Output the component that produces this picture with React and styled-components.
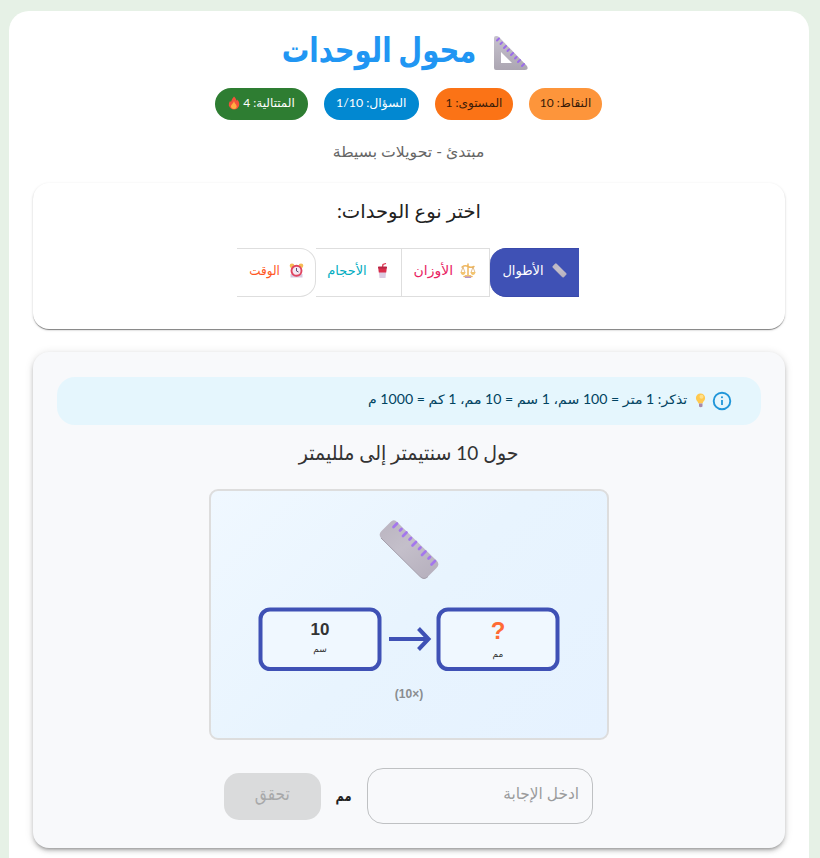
import React from "react";
import styled, { createGlobalStyle } from "styled-components";

const GlobalStyle = createGlobalStyle`
  *, *::before, *::after { box-sizing: border-box; }
  html, body { margin: 0; height: 858px; overflow: hidden; background: #e6f1e6; }
  body { font-family: "Lato", "DejaVu Sans", sans-serif; }
`;

const Page = styled.div`
  direction: rtl;
  width: 820px;
  height: 858px;
  padding: 11px 11px 0 9px;
  overflow: hidden;
`;

const Sheet = styled.main`
  height: 900px;
  padding: 0 24px;
  background: #fff;
  border-radius: 20px;
  display: flex;
  flex-direction: column;
`;

const Text = styled.span`
  display: block;
  margin: 0;
  white-space: nowrap;
  font-size: ${(p) => p.$size}px;
  font-weight: ${(p) => p.$weight || 400};
  color: ${(p) => p.$color || "inherit"};
  line-height: ${(p) => p.$line || 20}px;
  transform: translateY(${(p) => p.$dy || 0}px) scaleX(${(p) => p.$stretch || 1});
  transform-origin: ${(p) => p.$origin || "center"};
`;

const Header = styled.header`
  height: 77px;
  display: flex;
  align-items: flex-start;
  gap: 17px;
  padding: 21px 256px 0 0;
`;

const HeaderIcon = styled.div`
  width: 36px;
  height: 40px;
  padding-top: 3px;
  flex: none;
`;

const Chips = styled.div`
  display: flex;
  justify-content: center;
  gap: 16px;
  padding-right: 1px;
`;

const Chip = styled.div`
  width: ${(p) => p.$width}px;
  height: 32px;
  padding-bottom: 2px;
  border-radius: 16px;
  background: ${(p) => p.$bg};
  color: ${(p) => p.$color};
  display: flex;
  align-items: center;
  justify-content: center;
  gap: 3px;
`;

const Level = styled.div`
  height: 63px;
  padding-top: 21px;
  display: flex;
  justify-content: center;
`;

const Card = styled.section`
  flex: none;
  height: ${(p) => p.$height}px;
  margin-bottom: 23px;
  padding: ${(p) => p.$pad};
  background: ${(p) => p.$bg};
  border-radius: 16px;
  box-shadow: ${(p) => p.$shadow};
  display: flex;
  flex-direction: column;
  align-items: center;
`;

const Toggles = styled.div`
  height: 49px;
  margin-top: 21px;
  margin-right: 2px;
  display: flex;
`;

const Toggle = styled.button`
  width: ${(p) => p.$width}px;
  height: 49px;
  padding: 0 0 4px;
  border: 1px solid ${(p) => (p.$active ? "#3949ab" : "#dedede")};
  border-left: ${(p) => (p.$leftBorder ? "1px solid #dedede" : "0")};
  border-right: ${(p) => (p.$active ? "0" : "1px solid #dedede")};
  border-radius: ${(p) => p.$radius || "0"};
  background: ${(p) => (p.$active ? "#3f51b5" : "#fff")};
  color: ${(p) => p.$color};
  font-family: inherit;
  display: flex;
  align-items: center;
  justify-content: center;
  gap: 8px;
`;

const Hint = styled.div`
  align-self: stretch;
  height: 48px;
  padding: 0 29px 0 0;
  border-radius: 18px;
  background: #e5f6fd;
  display: flex;
  align-items: center;
  gap: 5px;
`;

const HintBody = styled.div`
  display: flex;
  align-items: center;
  gap: 7px;
  padding-bottom: 2px;
`;

const Question = styled.div`
  height: 64px;
  padding-top: 12px;
  display: flex;
  justify-content: center;
`;

const Board = styled.div`
  direction: ltr;
  width: 400px;
  height: 251px;
  flex: none;
  border: 2px solid #ddd;
  border-radius: 9px;
  background: linear-gradient(135deg, #f0f8ff 0%, #e8f4fe 50%, #e6f2ff 100%);
  svg { display: block; }
`;

const Answer = styled.div`
  display: flex;
  align-items: center;
  margin-top: 28px;
  margin-right: 1px;
`;

const Field = styled.div`
  width: 226px;
  height: 56px;
  padding: 0 13px 7px;
  border: 1px solid #bfc1c3;
  border-radius: 16px;
  display: flex;
  align-items: center;
`;

const Unit = styled.div`
  width: 46px;
  display: flex;
  justify-content: center;
`;

const Check = styled.button`
  width: 97px;
  height: 47px;
  margin-top: 1px;
  padding: 0 0 7px;
  border: 0;
  border-radius: 15px;
  background: #dadbdc;
  font-family: inherit;
  display: flex;
  align-items: center;
  justify-content: center;
`;

const TriangleIcon = () => (
  <svg width="36" height="36" viewBox="0 0 36 36">
    <defs>
      <linearGradient id="tri" x1="0" y1="0" x2="0" y2="1">
        <stop offset="0" stopColor="#c6c1cd" />
        <stop offset="1" stopColor="#aca6b2" />
      </linearGradient>
    </defs>
    <path fillRule="evenodd" fill="url(#tri)" d="M1 3Q1 1 3 1Q5 1 6 2L34 31Q36 35 32 35H3Q1 35 1 33ZM8 17V28H19Z" />
    <path d="M4 5.500l2-2M7.500 9l1.500-1.500M11 13l2-2M14.500 16l1.500-1.500M18 20l2-2M22 23.500l1.500-1.500M25 27l2-2M29 31l2-2" stroke="#9b6bea" strokeWidth="1.900" strokeLinecap="round" />
  </svg>
);

const Ruler = ({ marks = true }) => (
  <g>
    <path d="M2.500 11Q-1 14.500 2 18L41 56.500Q45 60.500 49 56.500L57.500 48Q61 44.500 58 41L18.500 2.500Q15 -1.500 11.500 2Z" fill="url(#ruler)" />
    <path d="M2 18L41 56.500Q45 60.500 49 56.500" fill="none" stroke="#a49eaa" strokeWidth="1" />
    {marks && (
      <path d="M14.500 7l3.500-3.500M21 10.500l1.500-1.500M24 16l3.500-3.500M30.500 19.500l1.500-1.500M33.500 25.500L37 22M40 29l1.500-1.500M43 35l3.500-3.500M49.500 38.500L51 37M52.500 44.500L56 41" stroke="#a477ed" strokeWidth="2.700" strokeLinecap="round" />
    )}
    <defs>
      <linearGradient id="ruler" x1="0" y1="0" x2=".7" y2="1">
        <stop offset="0" stopColor="#bab4c0" />
        <stop offset=".5" stopColor="#c4bfca" />
        <stop offset="1" stopColor="#b8b2bf" />
      </linearGradient>
    </defs>
  </g>
);

const RulerIcon = () => (
  <svg width="15" height="15" viewBox="-1 -1 62 62">
    <Ruler marks={false} />
  </svg>
);

const FireIcon = () => (
  <svg width="12" height="14" viewBox="0 0 12 14">
    <path d="M6 .5C8 2 8 4 9 5L9.500 3.500Q12 7 11 10Q9.500 13.500 6 13.500T.8 9.500Q.5 7 2 5L3 6Q3.500 3 6 .5Z" fill="#f2523b" />
    <path d="M6 5Q6.500 7 8 8.500Q9.500 10.500 8 12.300Q6 14 3.500 12Q2 10 4 8.200Q5.500 7 6 5Z" fill="#ffad42" />
  </svg>
);

const ScalesIcon = () => (
  <svg width="16" height="15" viewBox="0 0 16 15">
    <path d="M8 1v11M2 4Q5 2 8 3.500Q11 5 14 3.500M4 13.500h8" fill="none" stroke="#efb65d" strokeWidth="1.500" strokeLinecap="round" />
    <path d="M3 4L1 9.500h4L3 4M13 4l-2 5.500h4L13 4" fill="none" stroke="#d9ac6e" strokeWidth=".8" />
    <path d="M.5 9h5Q5 12 3 12T.5 9M10.500 9h5q-.5 3-2.500 3t-2.500-3M5 12h6v2.500H5z" fill="#f3c46f" />
    <path d="M5 13.500h6V15H5z" fill="#b793c8" />
  </svg>
);

const CupIcon = () => (
  <svg width="15" height="15" viewBox="0 0 15 15">
    <path d="M7.500 4L8 1.500l3-1" fill="none" stroke="#df3853" strokeWidth="1.300" />
    <path d="M3.500 5h8l-1 10h-6z" fill="#dccbe2" />
    <path d="M3.300 5h8.400l-.5 4.500H3.800z" fill="#db2d4a" />
    <rect x="3" y="3.500" width="9" height="2" rx=".7" fill="#b72645" />
  </svg>
);

const ClockIcon = () => (
  <svg width="15" height="15" viewBox="0 0 15 15">
    <circle cx="3" cy="2.800" r="2.300" fill="#f6bb55" />
    <circle cx="12" cy="2.800" r="2.300" fill="#f6bb55" />
    <rect x="1.500" y="11" width="12" height="3.500" fill="#d7c7df" />
    <circle cx="7.500" cy="7.800" r="5" fill="#f4e8f2" stroke="#e04460" strokeWidth="1.900" />
    <path d="M7.500 5v3l2 1" fill="none" stroke="#604b72" strokeWidth="1" />
  </svg>
);

const BulbIcon = () => (
  <svg width="13" height="15" viewBox="0 0 13 15">
    <path d="M6.500.5a4.600 4.600 0 0 0-4.600 4.600c0 2.200 1.600 3 2.600 5.400h4c1-2.400 2.600-3.200 2.600-5.400A4.600 4.600 0 0 0 6.500.5z" fill="#ffc94f" />
    <circle cx="7.500" cy="3.800" r="2" fill="#ffe08a" />
    <path d="M5 10.500h3.500v3Q6.700 15 5 13.500z" fill="#a98aaa" />
  </svg>
);

const InfoIcon = () => (
  <svg width="20" height="20" viewBox="0 0 20 20">
    <circle cx="10" cy="10" r="8.300" fill="none" stroke="#2196d9" strokeWidth="1.900" />
    <path d="M10 9v5" stroke="#2196d9" strokeWidth="1.800" />
    <circle cx="10" cy="6.200" r="1.050" fill="#2196d9" />
  </svg>
);

const Diagram = () => (
  <svg width="396" height="247" viewBox="211 491 396 247" direction="ltr" fontFamily='"Liberation Sans", "DejaVu Sans", sans-serif' textAnchor="middle">
    <g transform="translate(379 520)"><Ruler /></g>
    <g fill="#f0f8ff" stroke="#3f51b5" strokeWidth="4">
      <rect x="260.500" y="609.500" width="119" height="59.500" rx="9.500" />
      <rect x="438.500" y="609.500" width="119" height="59.500" rx="9.500" />
      <path d="M389 639H428M418.500 628.500L428.500 639L418.500 649.500" fill="none" />
    </g>
    <text x="320" y="634.500" fontSize="17" fontWeight="700" fill="#333">10</text>
    <text x="320" y="651.500" fontSize="9" fill="#333">سم</text>
    <text x="498" y="639" fontSize="24" fontWeight="700" fill="#ff6b35">?</text>
    <text x="498" y="657" fontSize="9" fill="#333">مم</text>
    <text x="409" y="698" fontSize="12" fontWeight="700" fill="#8a8d90">(10×)</text>
  </svg>
);

const CARD_SHADOW = "0 2px 1px -1px rgba(0,0,0,.3), 0 1px 1px rgba(0,0,0,.2), 0 1px 3px rgba(0,0,0,.14)";
const DEEP_SHADOW = "0 3px 3px -2px rgba(0,0,0,.24), 0 3px 4px rgba(0,0,0,.16), 0 1px 8px rgba(0,0,0,.13)";

export default function App() {
  return (
    <>
      <GlobalStyle />
      <Page>
        <Sheet>
          <Header>
            <HeaderIcon><TriangleIcon /></HeaderIcon>
            <Text as="h1" $size={34} $weight={700} $color="#2196f3" $line={40} $dy={-3} $stretch={0.81} $origin="right">محول الوحدات</Text>
          </Header>

          <Chips>
            <Chip $width={73} $bg="#fd953b" $color="#3a1b08"><Text $size={12}>النقاط: 10</Text></Chip>
            <Chip $width={78} $bg="#fb7316" $color="#3a1b08"><Text $size={12}>المستوى: 1</Text></Chip>
            <Chip $width={95} $bg="#0288d1" $color="#fff"><Text $size={12} $stretch={1.03}>السؤال: <bdi dir="ltr">1/10</bdi></Text></Chip>
            <Chip $width={93} $bg="#2e7d32" $color="#fff"><Text $size={12}>المتتالية: 4</Text><FireIcon /></Chip>
          </Chips>

          <Level><Text $size={15} $color="#666" $stretch={1.045}>مبتدئ - تحويلات بسيطة</Text></Level>

          <Card $height={146} $pad="14px 0 0" $bg="#fff" $shadow={CARD_SHADOW}>
            <Text as="h2" $size={19} $color="#222" $line={30} $dy={-1} $stretch={1.03}>اختر نوع الوحدات:</Text>
            <Toggles>
              <Toggle $width={89} $active $color="#fff" $radius="16px 0 0 16px"><RulerIcon /><Text $size={13} $dy={-1}>الأطوال</Text></Toggle>
              <Toggle $width={88} $color="#e91e63"><ScalesIcon /><Text $size={13} $dy={-1} $stretch={1.08}>الأوزان</Text></Toggle>
              <Toggle $width={86} $color="#00acc1" $leftBorder={false}><CupIcon /><Text $size={13} $dy={-1}>الأحجام</Text></Toggle>
              <Toggle $width={79} $color="#ff5722" $radius="0 16px 16px 0"><ClockIcon /><Text $size={13} $dy={-1} $stretch={0.92}>الوقت</Text></Toggle>
            </Toggles>
          </Card>

          <Card $height={496} $pad="25px 24px 0" $bg="#f8f9fb" $shadow={DEEP_SHADOW}>
            <Hint>
              <InfoIcon />
              <HintBody>
                <BulbIcon />
                <Text $size={13} $color="#014361" $origin="right" $dy={-1} $stretch={1.085}>تذكر: 1 متر = 100 سم، 1 سم = 10 مم، 1 كم = 1000 م</Text>
              </HintBody>
            </Hint>
            <Question><Text $size={20} $color="#333" $line={30} $stretch={0.95}>حول 10 سنتيمتر إلى ملليمتر</Text></Question>
            <Board><Diagram /></Board>
            <Answer>
              <Field><Text $size={16} $color="#9b9c9d" $origin="right" $stretch={0.96}>ادخل الإجابة</Text></Field>
              <Unit><Text $size={15} $weight={700} $color="#222" $dy={-1} $stretch={0.76}>مم</Text></Unit>
              <Check><Text $size={18} $color="#a8a9aa" $stretch={0.86}>تحقق</Text></Check>
            </Answer>
          </Card>
        </Sheet>
      </Page>
    </>
  );
}
